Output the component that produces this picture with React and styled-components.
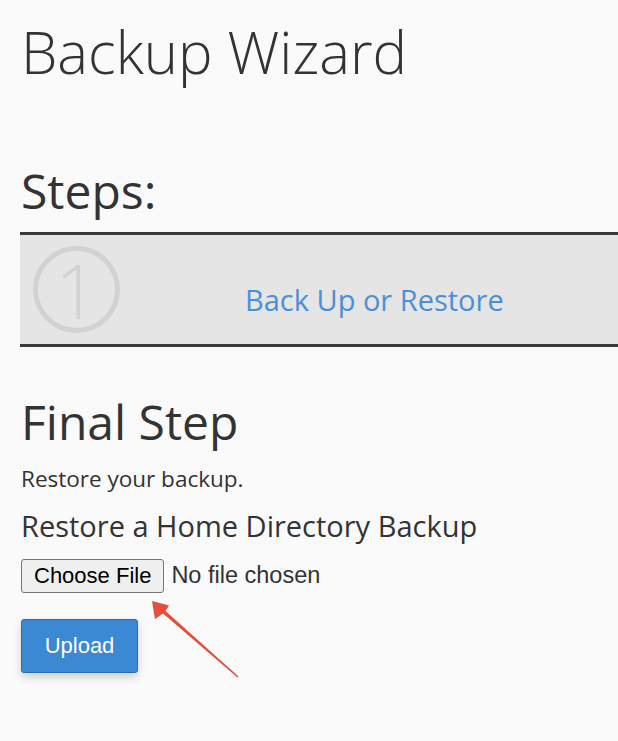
import React from 'react'
import styled, { createGlobalStyle } from 'styled-components'

const GlobalStyle = createGlobalStyle`
  body {
    margin: 0;
    background: #fafafa;
    font-family: "Open Sans", "Liberation Sans", sans-serif;
    color: #333;
  }
`

const Page = styled.div`
  position: relative;
  width: 618px;
  height: 741px;
  overflow: hidden;
  padding: 23px 0 0 21px;
  box-sizing: border-box;
`

const Title = styled.h1`
  margin: 0;
  font-size: 58px;
  font-weight: 300;
  line-height: 1;
`

const Heading = styled.h2`
  margin: ${p => p.top}px 0 0 0;
  font-size: ${p => p.size}px;
  font-weight: 400;
  line-height: 1;
`

const StepsBar = styled.div`
  margin: 17px 0 0 -1px;
  width: 640px;
  height: 109px;
  background: #e5e5e5;
  border-top: 3px solid #3a3a3a;
  border-bottom: 3px solid #3a3a3a;
  display: flex;
  align-items: center;
  padding-left: 13px;
`

const StepNumber = styled.span`
  width: 77px;
  height: 77px;
  flex: none;
  border: 5px solid #d2d2d2;
  border-radius: 50%;
  display: flex;
  align-items: center;
  justify-content: center;
  font-size: 76px;
  font-weight: 300;
  line-height: 73px;
  color: #d2d2d2;
`

const StepLink = styled.a`
  margin: 20px 0 0 125px;
  font-size: 29px;
  line-height: 1;
  color: #4a90d9;
  text-decoration: none;
`

const Text = styled.p`
  margin: ${p => p.top}px 0 0 0;
  font-size: ${p => p.size}px;
  line-height: 1;
  color: #333;
`

const FileRow = styled.div`
  margin: 19px 0 0 0;
  display: flex;
  align-items: center;
  gap: 7px;
  font-family: "Liberation Sans", Arial, sans-serif;
  font-size: 22px;
`

const FileButton = styled.button`
  height: 34px;
  padding: 0 12px;
  font: inherit;
  color: #000;
  background: #efefef;
  border: 1px solid #767676;
  border-radius: 3px;
`

const FileName = styled.span`
  font-size: 23.5px;
  color: #333;
`

const UploadButton = styled.button`
  margin: 26px 0 0 0;
  width: 117px;
  height: 54px;
  font-family: "Liberation Sans", Arial, sans-serif;
  font-size: 22px;
  color: #fff;
  background: #3a89d2;
  border: 1px solid #2c6fae;
  border-radius: 3px;
  box-shadow: 0 4px 8px rgba(0, 0, 0, 0.18);
`

const Arrow = styled.svg`
  position: absolute;
  left: 140px;
  top: 590px;
`

export default function App() {
  return (
    <Page>
      <GlobalStyle />
      <Title>Backup Wizard</Title>
      <Heading size={48} top={86}>Steps:</Heading>
      <StepsBar>
        <StepNumber>1</StepNumber>
        <StepLink href="#">Back Up or Restore</StepLink>
      </StepsBar>
      <Heading size={48} top={51}>Final Step</Heading>
      <Text size={22.5} top={22}>Restore your backup.</Text>
      <Text size={29} top={20}>Restore a Home Directory Backup</Text>
      <FileRow>
        <FileButton>Choose File</FileButton>
        <FileName>No file chosen</FileName>
      </FileRow>
      <UploadButton>Upload</UploadButton>
      <Arrow width="110" height="95" viewBox="0 0 110 95">
        <polygon
          points="12,11 29,15.5 25.5,21 98.5,86.5 97.5,87.5 23,23.5 15,29"
          fill="#e84c3d"
        />
      </Arrow>
    </Page>
  )
}
